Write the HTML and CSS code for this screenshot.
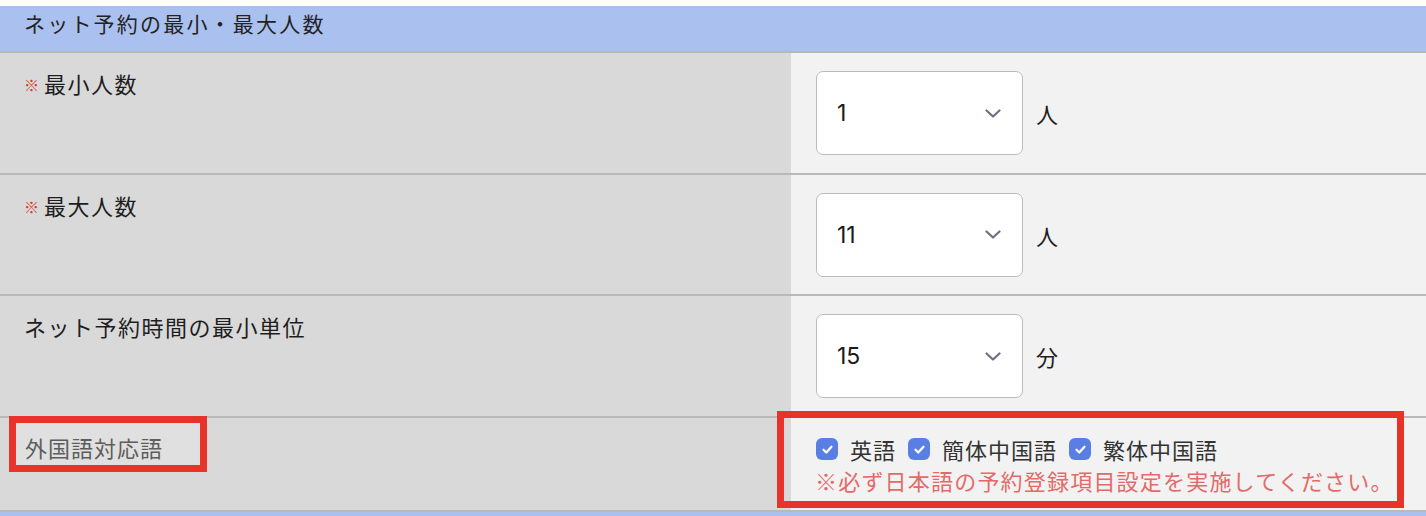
FILE: index.html
```html
<!DOCTYPE html>
<html lang="ja">

<head>
	<meta charset="UTF-8">
	<meta name="viewport" content="width=device-width, initial-scale=1.0">
	<title>ネット予約設定</title>
	<link rel="stylesheet" href="styles.css">
</head>

<body>
	<div class="page">
		<div class="section-title">ネット予約の最小・最大人数</div>

		<div class="row">
			<div class="label"><span class="req">※</span>最小人数</div>
			<div class="field">
				<div class="select"><span class="value">1</span><svg class="chev" viewBox="0 0 16 9"><path d="M1.5 1.5l6.5 6 6.5-6" /></svg></div>
				<span class="unit">人</span>
			</div>
		</div>

		<div class="row">
			<div class="label"><span class="req">※</span>最大人数</div>
			<div class="field">
				<div class="select"><span class="value">11</span><svg class="chev" viewBox="0 0 16 9"><path d="M1.5 1.5l6.5 6 6.5-6" /></svg></div>
				<span class="unit">人</span>
			</div>
		</div>

		<div class="row">
			<div class="label">ネット予約時間の最小単位</div>
			<div class="field">
				<div class="select"><span class="value">15</span><svg class="chev" viewBox="0 0 16 9"><path d="M1.5 1.5l6.5 6 6.5-6" /></svg></div>
				<span class="unit">分</span>
			</div>
		</div>

		<div class="row row-lang">
			<div class="label label-plain">外国語対応語</div>
			<div class="field field-lang">
				<div class="checks">
					<label class="check"><span class="box"><svg viewBox="0 0 12 12"><path d="M2.8 6.2l2.2 2.2 4.2-4.6" /></svg></span>英語</label>
					<label class="check"><span class="box"><svg viewBox="0 0 12 12"><path d="M2.8 6.2l2.2 2.2 4.2-4.6" /></svg></span>簡体中国語</label>
					<label class="check"><span class="box"><svg viewBox="0 0 12 12"><path d="M2.8 6.2l2.2 2.2 4.2-4.6" /></svg></span>繁体中国語</label>
				</div>
				<div class="note">※必ず日本語の予約登録項目設定を実施してください。</div>
			</div>
			<!-- 注記用の赤枠 -->
			<div class="mark mark-left"></div>
			<div class="mark mark-right"></div>
		</div>

		<div class="section-foot"></div>
	</div>
</body>

</html>
```

FILE: styles.css
```css
/* 基础样式 */
body {
	margin: 0;
	background: #fff;
	font-family: 'Noto Sans CJK JP', 'Noto Sans', sans-serif;
	color: #222;
}

.page {
	padding-top: 6px;
}

.section-title {
	height: 47px;
	box-sizing: border-box;
	padding: 0 24px;
	line-height: 34px;
	font-size: 21px;
	letter-spacing: 2.2px;
	background: #aac0ee;
	border-bottom: 2px solid #b7b7b7;
}

.row {
	position: relative;
	display: grid;
	grid-template-columns: 791px 1fr;
	border-bottom: 2px solid #b9b9b9;
}

.label {
	background: #d9d9d9;
	padding: 13px 24px 0;
	font-size: 22px;
	line-height: 34px;
	letter-spacing: 1.5px;
	color: #1e1e1e;
}

.req {
	color: #d9372b;
	font-size: 15px;
	margin-right: 5px;
	vertical-align: 2px;
	letter-spacing: 0;
}

.label-plain {
	color: #3a3a3a;
	padding-top: 12px;
	padding-left: 25px;
	letter-spacing: 1px;
}

.field {
	background: #f2f2f2;
	padding: 18px 25px 17.5px;
	display: flex;
	align-items: center;
	gap: 13px;
}

.select {
	width: 207px;
	height: 84px;
	box-sizing: border-box;
	background: #fff;
	border: 1.5px solid #bcbcbc;
	border-radius: 7px;
	display: flex;
	align-items: center;
	justify-content: space-between;
	padding: 0 21px 0 20px;
}

.value {
	font-family: 'Inter', 'Noto Sans', sans-serif;
	font-size: 23px;
	color: #1a1a1a;
}

.chev {
	width: 16px;
	height: 9px;
	fill: none;
	stroke: #6b7180;
	stroke-width: 2.2;
	stroke-linecap: round;
	stroke-linejoin: round;
}

.unit {
	font-size: 22px;
	color: #1e1e1e;
}

/* 外国語の行 */
.row-lang {
	height: 92px;
}

.field-lang {
	display: block;
	padding: 16px 25px 0;
}

.checks {
	display: flex;
	gap: 12px;
	line-height: 31px;
	font-size: 22px;
	letter-spacing: 1px;
	color: #333;
}

.check {
	display: flex;
	align-items: center;
	gap: 12px;
}

.box {
	width: 22px;
	height: 22px;
	border-radius: 6px;
	background: #5a7fe4;
	display: flex;
	align-items: center;
	justify-content: center;
}

.box svg {
	width: 15px;
	height: 15px;
	fill: none;
	stroke: #fff;
	stroke-width: 1.8;
	stroke-linecap: round;
	stroke-linejoin: round;
}

.note {
	font-size: 22px;
	line-height: 31px;
	letter-spacing: 1.2px;
	color: #e36a68;
	margin-left: -1px;
}

.mark {
	position: absolute;
	border: 7px solid #e8332a;
	box-sizing: border-box;
}

.mark-left {
	left: 9px;
	top: -2px;
	width: 198px;
	height: 56px;
	background: rgba(255, 255, 255, 0.18);
}

.mark-right {
	left: 777px;
	top: -7px;
	width: 627px;
	height: 97px;
}

.section-foot {
	height: 10px;
	background: #aac0ee;
}
```
